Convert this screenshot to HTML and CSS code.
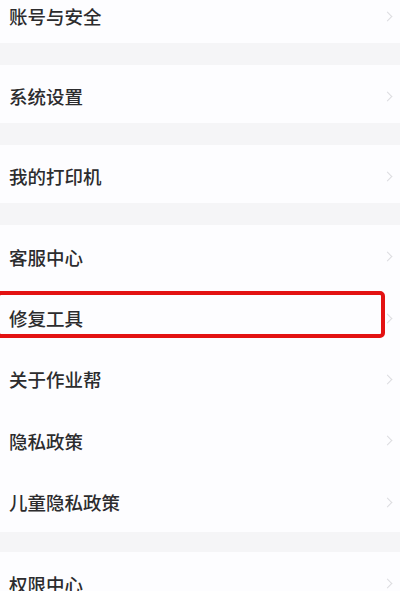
FILE: index.html
```html
<!DOCTYPE html>
<html lang="zh-CN">
<head>
<meta charset="utf-8">
<link rel="stylesheet" href="styles.css">
</head>
<body>
<div class="list">
  <div class="group">
    <div class="row short"><span class="label">账号与安全</span><span class="chev"></span></div>
  </div>
  <div class="sep"></div>
  <div class="group">
    <div class="row short"><span class="label">系统设置</span><span class="chev"></span></div>
  </div>
  <div class="sep"></div>
  <div class="group">
    <div class="row short"><span class="label">我的打印机</span><span class="chev"></span></div>
  </div>
  <div class="sep"></div>
  <div class="group">
    <div class="row"><span class="label">客服中心</span><span class="chev"></span></div>
    <div class="row highlighted"><span class="label">修复工具</span><span class="chev"></span><span class="mark"></span></div>
    <div class="row"><span class="label">关于作业帮</span><span class="chev"></span></div>
    <div class="row"><span class="label">隐私政策</span><span class="chev"></span></div>
    <div class="row"><span class="label">儿童隐私政策</span><span class="chev"></span></div>
  </div>
  <div class="sep thin"></div>
  <div class="group">
    <div class="row"><span class="label">权限中心</span><span class="chev"></span></div>
  </div>
</div>
</body>
</html>
```
FILE: styles.css
```css
html, body {
  margin: 0;
  padding: 0;
  background: #fdfdff;
  overflow: hidden;
}
body {
  width: 400px;
  height: 591px;
  font-family: "Noto Sans CJK SC", "Noto Sans", sans-serif;
}
.list {
  margin-top: -15px;
  display: flex;
  flex-direction: column;
}
.group {
  display: flex;
  flex-direction: column;
  background: #fdfdff;
}
.sep {
  height: 22px;
  background: #f5f5f7;
}
.sep.thin {
  height: 20px;
}
.row {
  position: relative;
  height: 61.4px;
  display: flex;
  align-items: center;
  justify-content: space-between;
  padding: 2px 4px 0 9px;
  box-sizing: border-box;
}
.row.short {
  height: 58px;
  padding-top: 4px;
}
.label {
  font-size: 18.5px;
  font-weight: 500;
  color: #2c2c2e;
  letter-spacing: 0;
}
.chev {
  width: 6px;
  height: 6px;
  border-top: 1.5px solid #dcdce0;
  border-right: 1.5px solid #dcdce0;
  transform: rotate(45deg);
  margin-right: 5px;
}
.mark {
  position: absolute;
  left: -4px;
  top: 5px;
  width: 389px;
  height: 47px;
  box-sizing: border-box;
  border: 4px solid #e31212;
  border-radius: 5px;
}
```
